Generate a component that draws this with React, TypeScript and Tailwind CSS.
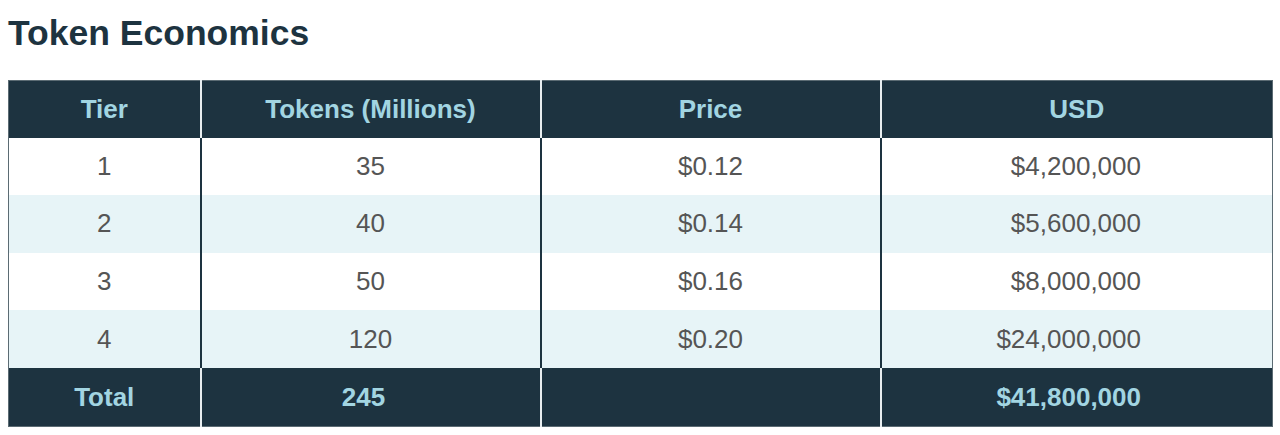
import * as React from 'react';

const ROWS = [
  { tier: '1', tokens: '35', price: '$0.12', usd: '$4,200,000' },
  { tier: '2', tokens: '40', price: '$0.14', usd: '$5,600,000' },
  { tier: '3', tokens: '50', price: '$0.16', usd: '$8,000,000' },
  { tier: '4', tokens: '120', price: '$0.20', usd: '$24,000,000' },
];

export default function App() {
  return (
    <div className="min-h-[435px] bg-white px-2 pt-[13px] font-['Liberation_Sans',Arial,sans-serif]">
      <h1 className="text-[35.5px] leading-[40px] font-bold text-[#1d3340]">Token Economics</h1>

      <table className="mt-[27px] w-[1264px] table-fixed border-collapse border border-[#5b6b73] text-center text-[26px]">
        <colgroup>
          <col className="w-[192px]" />
          <col className="w-[340px]" />
          <col className="w-[340px]" />
          <col className="w-[392px]" />
        </colgroup>
        <thead>
          <tr className="h-[57px] bg-[#1d3340] font-bold text-[#a2d5e2]">
            <th className="border-r-2 border-[#e8eef0] font-bold">Tier</th>
            <th className="border-r-2 border-[#e8eef0] font-bold">Tokens (Millions)</th>
            <th className="border-r-2 border-[#e8eef0] font-bold">Price</th>
            <th className="font-bold">USD</th>
          </tr>
        </thead>
        <tbody className="text-[#555555]">
          {ROWS.map((row, idx) => (
            <tr key={row.tier} className={`h-[57.6px] ${idx % 2 === 1 ? 'bg-[#e7f4f7]' : 'bg-white'}`}>
              <td className="border-r-2 border-[#1d3340]">{row.tier}</td>
              <td className="border-r-2 border-[#1d3340]">{row.tokens}</td>
              <td className="border-r-2 border-[#1d3340]">{row.price}</td>
              <td className="pr-[131px] text-right">{row.usd}</td>
            </tr>
          ))}
        </tbody>
        <tfoot>
          <tr className="h-[59px] bg-[#1d3340] font-bold text-[#a2d5e2]">
            <td className="border-r-2 border-[#e8eef0]">Total</td>
            <td className="border-r-2 border-[#e8eef0] pr-[14px]">245</td>
            <td className="border-r-2 border-[#e8eef0]"></td>
            <td className="pr-[131px] text-right">$41,800,000</td>
          </tr>
        </tfoot>
      </table>
    </div>
  );
}
